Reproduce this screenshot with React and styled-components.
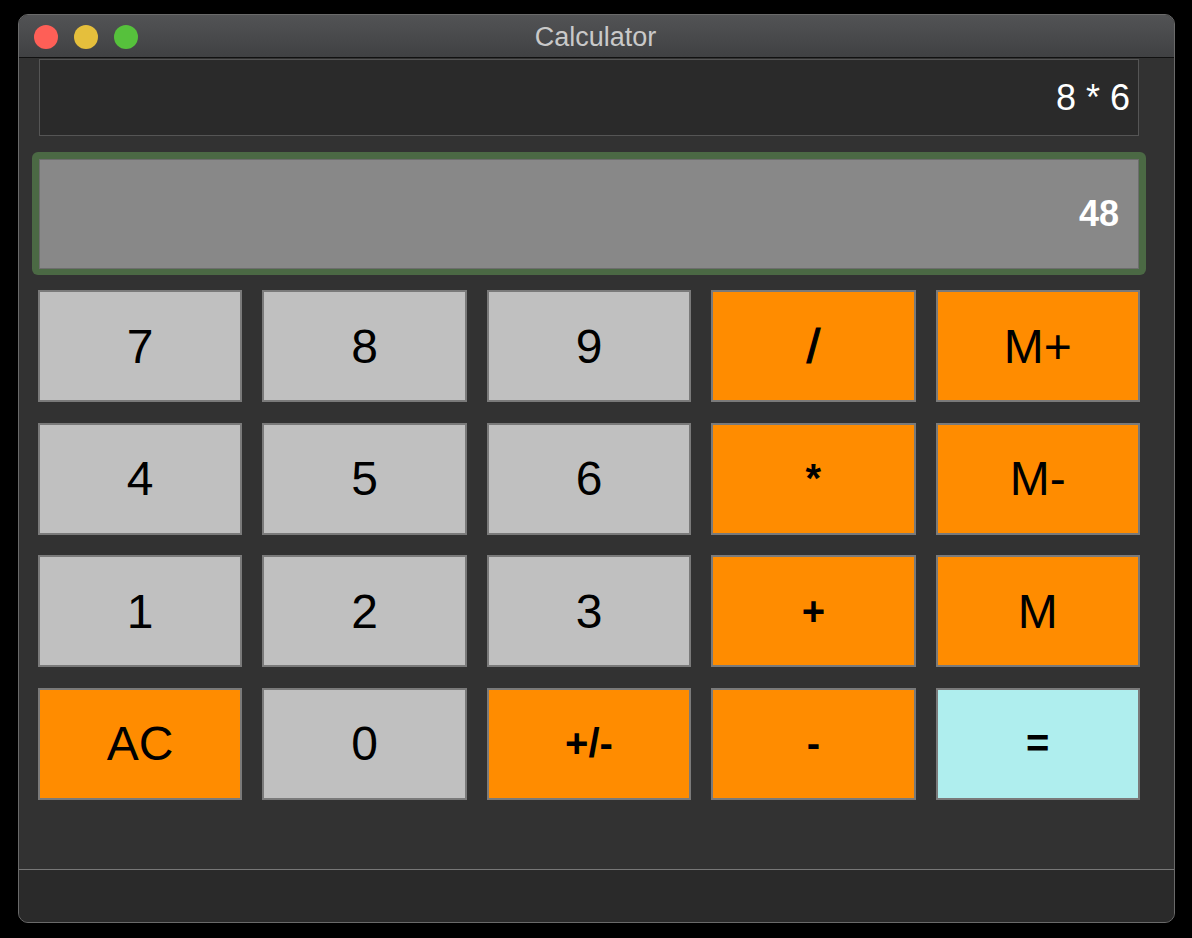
import React from "react";
import styled, { createGlobalStyle } from "styled-components";

const GlobalStyle = createGlobalStyle`
  html, body {
    margin: 0;
    padding: 0;
    background: #000;
    font-family: "Liberation Sans", Arial, sans-serif;
  }
`;

const Screen = styled.div`
  width: 1192px;
  height: 938px;
  background: #000;
  padding: 14px 17px 17px 18px;
  box-sizing: border-box;
`;

const Window = styled.div`
  height: 907px;
  display: flex;
  flex-direction: column;
  border: 1px solid #6a6a6a;
  border-radius: 10px;
  overflow: hidden;
  background: #323232;
`;

const TitleBar = styled.div`
  position: relative;
  height: 42px;
  flex-shrink: 0;
  display: flex;
  align-items: center;
  justify-content: center;
  background: linear-gradient(#525355, #404143);
  border-bottom: 1px solid #111;
`;

const Lights = styled.div`
  position: absolute;
  left: 15px;
  top: 10px;
  display: flex;
  gap: 16px;
`;

const Light = styled.span`
  width: 24px;
  height: 24px;
  border-radius: 50%;
  background: ${(p) => p.color};
`;

const Title = styled.span`
  font-size: 27px;
  color: #c9c9c9;
  padding: 2px 2px 0 0;
`;

const Body = styled.div`
  flex: 1;
  display: flex;
  flex-direction: column;
  padding: 1px 35px 0 20px;
`;

const Expression = styled.div`
  height: 77px;
  box-sizing: border-box;
  border: 1px solid #555;
  background: #2a2a2a;
  color: #fff;
  font-size: 36px;
  display: flex;
  align-items: center;
  justify-content: flex-end;
  padding: 0 8px 0 0;
`;

const ResultRing = styled.div`
  margin: 16px -7px 0 -7px;
  padding: 7px 7px 6px 7px;
  background: #4b6944;
  border-radius: 6px;
`;

const Result = styled.div`
  height: 110px;
  box-sizing: border-box;
  border: 1px solid #6d6d6d;
  background: #888;
  color: #fff;
  font-size: 36px;
  font-weight: bold;
  display: flex;
  align-items: center;
  justify-content: flex-end;
  padding: 0 19px 0 0;
`;

const Keys = styled.div`
  margin: 15px -1px 0 -1px;
  display: grid;
  grid-template-columns: repeat(5, 1fr);
  grid-auto-rows: 112px;
  column-gap: 20px;
  row-gap: 20.5px;
`;

const bg = {
  num: "#c0c0c0",
  op: "#ff8c00",
  eq: "#afeeee",
};

const Key = styled.button`
  border: 2px solid #7a7a7a;
  background: ${(p) => bg[p.kind]};
  color: #000;
  font-family: "Liberation Sans", Arial, sans-serif;
  font-size: ${(p) => (p.bold ? "40px" : "48px")};
  font-weight: ${(p) => (p.bold ? "bold" : "normal")};
  -webkit-text-stroke: ${(p) => (p.heavy ? "1.2px #000" : "0")};
  padding: 0;
  margin: 0;
  cursor: pointer;
`;

const Spacer = styled.div`
  flex: 1;
`;

const StatusBar = styled.div`
  height: 52px;
  flex-shrink: 0;
  border-top: 1px solid #777;
  background: #2a2a2a;
`;

const keys = [
  { label: "7", kind: "num" },
  { label: "8", kind: "num" },
  { label: "9", kind: "num" },
  { label: "/", kind: "op", heavy: true },
  { label: "M+", kind: "op" },
  { label: "4", kind: "num" },
  { label: "5", kind: "num" },
  { label: "6", kind: "num" },
  { label: "*", kind: "op", bold: true },
  { label: "M-", kind: "op" },
  { label: "1", kind: "num" },
  { label: "2", kind: "num" },
  { label: "3", kind: "num" },
  { label: "+", kind: "op", bold: true },
  { label: "M", kind: "op" },
  { label: "AC", kind: "op" },
  { label: "0", kind: "num" },
  { label: "+/-", kind: "op", bold: true },
  { label: "-", kind: "op", bold: true },
  { label: "=", kind: "eq", bold: true },
];

export default function App() {
  return (
    <>
      <GlobalStyle />
      <Screen>
        <Window>
          <TitleBar>
            <Lights>
              <Light color="#fe5f57" />
              <Light color="#e5bf3c" />
              <Light color="#56c13c" />
            </Lights>
            <Title>Calculator</Title>
          </TitleBar>
          <Body>
            <Expression>8 * 6</Expression>
            <ResultRing>
              <Result>48</Result>
            </ResultRing>
            <Keys>
              {keys.map((k) => (
                <Key key={k.label} kind={k.kind} bold={k.bold} heavy={k.heavy}>
                  {k.label}
                </Key>
              ))}
            </Keys>
            <Spacer />
          </Body>
          <StatusBar />
        </Window>
      </Screen>
    </>
  );
}
